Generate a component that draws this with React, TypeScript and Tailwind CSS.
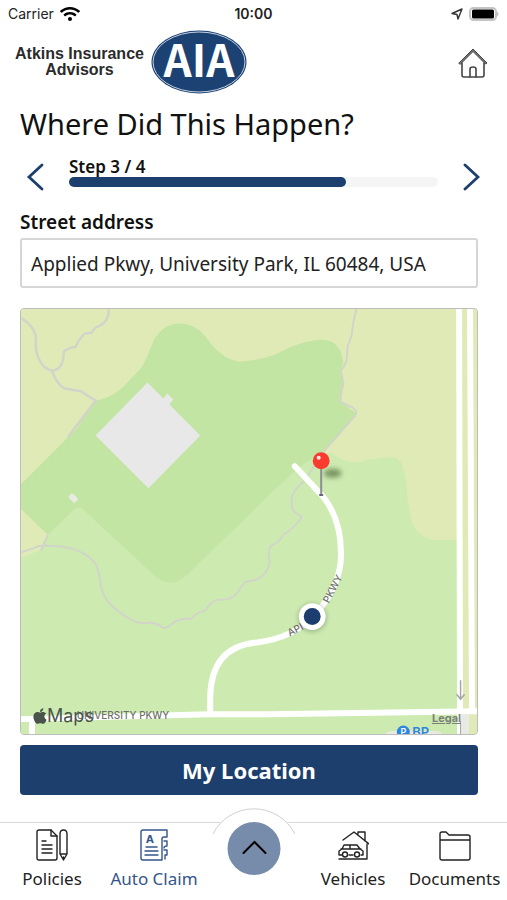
import { useState, type ReactNode } from 'react';
import { FaApple, FaWifi } from 'react-icons/fa';

interface NavItemProps {
  label: string;
  active?: boolean;
  children: ReactNode;
}

const TOTAL_STEPS = 4;

function NavItem({ label, active, children }: NavItemProps) {
  return (
    <a
      href="#"
      aria-current={active ? 'page' : undefined}
      className={`flex flex-col items-center gap-1.5 pt-1.5 whitespace-nowrap ${
        active ? 'text-[#34558a]' : 'text-[#222222]'
      }`}
    >
      <svg
        viewBox="0 0 32 32"
        className="w-8 h-8"
        fill="none"
        stroke="currentColor"
        strokeWidth="1.4"
        strokeLinecap="round"
        strokeLinejoin="round"
        aria-hidden="true"
      >
        {children}
      </svg>
      <span className="text-[17px] leading-6">{label}</span>
    </a>
  );
}

function StatusBar() {
  return (
    <div className="grid grid-cols-3 items-center h-7 px-2 font-['Inter',sans-serif] text-sm text-[#222222]">
      <div className="flex items-center gap-1.5">
        <span>Carrier</span>
        <FaWifi className="w-5 h-4 text-black" />
      </div>
      <span className="text-center font-semibold">10:00</span>
      <div className="flex items-center justify-end gap-1.5">
        <svg viewBox="0 0 12 12" className="w-3 h-3" fill="none" stroke="#333333" strokeWidth="1.4" strokeLinejoin="round">
          <path d="M1 5.500 11 1 7 11 6 6.500Z" />
        </svg>
        <svg viewBox="0 0 30 14" className="w-[30px] h-3.5">
          <rect x="1" y="1" width="26" height="12" rx="3.500" fill="#ffffff" stroke="#c4c4c4" strokeWidth="2" />
          <rect x="3" y="2.500" width="22" height="9" rx="1.500" fill="#000000" />
          <path d="M28 4.500v5q3-2.500 0-5Z" fill="#bdbdbd" />
        </svg>
      </div>
    </div>
  );
}

function Header() {
  return (
    <header className="flex items-center justify-between h-[68px] pl-[15px] pr-[19px]">
      <div className="flex items-center gap-[7px]">
        <p className="text-center font-['Liberation_Sans',sans-serif] font-bold text-base leading-4 text-[#2b2b2b]">
          Atkins Insurance
          <br />
          Advisors
        </p>
        <svg viewBox="0 0 96 64" className="w-24 h-16" role="img" aria-label="AIA logo">
          <ellipse cx="48" cy="32" rx="47.500" ry="31.500" fill="#1c4274" />
          <ellipse cx="48" cy="32" rx="46" ry="30" fill="none" stroke="#c5d0df" strokeWidth="1" />
          <text
            x="48"
            y="47"
            textAnchor="middle"
            fontSize="44"
            fontWeight="700"
            fill="#ffffff"
            className="font-['Noto_Sans_CJK_SC',sans-serif]"
          >
            AIA
          </text>
        </svg>
      </div>
      <button type="button" aria-label="Home" className="mt-0.5">
        <svg viewBox="0 0 30 30" className="w-[30px] h-[30px]" fill="none" stroke="#444444" strokeWidth="1.600" strokeLinecap="round" strokeLinejoin="round">
          <path d="M1 15 15 1l14 14-1.500 1L15 3.500 2.500 16Z" fill="#777777" strokeWidth="1" />
          <path d="M4 15v12q0 2 2 2h18q2 0 2-2V15" />
          <path d="M12 29v-8q0-2 3-2t3 2v8" />
        </svg>
      </button>
    </header>
  );
}

function LocationMap() {
  return (
    <div className="relative aspect-[458/427] overflow-hidden rounded border border-[#bdbdbd] bg-[#e0eab6]">
      <svg viewBox="20 308 458 427" preserveAspectRatio="xMidYMid slice" className="block w-full h-full" role="img" aria-label="Map of Applied Pkwy">
        <defs>
          <filter id="soft" x="-50%" y="-100%" width="200%" height="300%">
            <feGaussianBlur stdDeviation="2.500" />
          </filter>
        </defs>

        {/* terrain */}
        <rect x="20" y="308" width="458" height="427" fill="#e0eab6" />
        <path
          d="M20 558 38 551 47 535 78 500H260L312 455 333 453Q345 463 359 462Q376 457 393 457Q401 458 403 465Q408 480 408 496L412 520Q417 537 435 540H458V735H20Z"
          fill="#cdebb1"
        />
        <path
          d="M20 484 82 422Q66 436 96 400Q112 397 123 386L140 368Q145 361 151 345Q158 327 174 323Q194 320 207 338Q222 359 240 361Q262 359 277 353Q298 341 320 339Q335 338 341 351L344 362 340 371 344 382 340 400Q348 407 357 413L325 451 308 461Q294 470 250 514L187 575Q170 591 153 575L84 511Q78 504 72 511L47 535 20 509Z"
          fill="#c3e5a4"
        />
        <path d="m147 382 16 16 4-5 6 6-4 5 31 31-52 53-53-53Z" fill="#e8e8e8" />
        <rect x="68" y="495" width="9" height="6" rx="2" fill="#e8ebe4" transform="rotate(45 72.500 498)" />

        {/* trails */}
        <g fill="none" stroke="#d2d4ca" strokeWidth="2" strokeLinejoin="round">
          <path d="M108 308q1 12-9 17-5 1-8 7-8 0-10 4-4 4-6 10-10 2-12 5 0 18-12 19" strokeWidth="2.500" />
          <path d="M20 317q13 8 15 19-1 15 3 22 4 10 13 12 5 14 13 18l17 3q8 6 14 9L67 437" strokeWidth="2.500" />
          <path d="M357 308q-4 14-5 27l-4 11-1 14q-2 6-6 10l3 13q-3 8-3 18 5 3 12 6 6 4 2 9L325 450 305 480q-15 13-13 21-1 9 3 11l7 5-2 3q-7 9-17 15-2 6-12 11-4 6-1 16-2 13-14 18l-10 2q-4 3-8 10-6 9-20 8-8 2-13 11-9 2-14 8-12 0-18 4-5 6-11 5-5-4-12-5-11 2-19-3-27-14-31-34-2-19-6-23-6-8-19-13-14-5-37-4-6 3-20 7" />
          <path d="m40 551 7-16" />
        </g>

        {/* roads */}
        <g fill="none" stroke="#ffffff">
          <path d="m460 308 1 427M471 308l2 404" strokeWidth="6" />
          <path d="m20 720 190-5h60l208-3" strokeWidth="6" />
          <path d="M31 719v16" strokeWidth="6" />
          <path
            d="M210 714V698Q211 647 257 643Q295 638 315 615Q337 592 341 563Q344 522 323 496L295 466"
            strokeWidth="6"
            strokeLinecap="round"
          />
        </g>
        <rect x="462" y="715" width="8" height="20" fill="#e9e9e5" />
        <path d="M461.500 722v13" stroke="#a5a5a5" fill="none" />
        <path d="M461.500 681v18m-4-4 4 5 4-5" stroke="#a5a5a5" strokeWidth="1.500" fill="none" />

        {/* labels */}
        <g className="font-['Inter',sans-serif]" fontSize="10" fontWeight="500" fill="#6f706d">
          <text x="290" y="637" transform="rotate(-28 290 637)">API</text>
          <text x="329" y="604" transform="rotate(-62 329 604)">PKWY</text>
          <text x="76" y="720">UNIVERSITY PKWY</text>
        </g>
        <path d="M386 735q2-3 8-3h42q6 0 7 3Z" fill="#e9e9e0" />
        <circle cx="404" cy="733" r="6.500" fill="#2d86e0" />
        <g className="font-['Inter',sans-serif]" fontWeight="600">
          <text x="404" y="736" textAnchor="middle" fontSize="9" fill="#ffffff">P</text>
          <text x="413" y="738" fontSize="13" fill="#2d86e0">BP</text>
        </g>

        {/* current position */}
        <circle cx="312.500" cy="618" r="14" fill="#000000" opacity="0.250" filter="url(#soft)" />
        <circle cx="312.500" cy="617" r="13.500" fill="#ffffff" />
        <circle cx="312.500" cy="617" r="8.500" fill="#1c3d6e" />

        {/* dropped pin */}
        <ellipse cx="333" cy="473" rx="9" ry="4.500" fill="#59713f" opacity="0.700" filter="url(#soft)" />
        <path d="M321.500 466v29" stroke="#8b8f92" strokeWidth="2" />
        <path d="M319.500 495h4" stroke="#666a6e" strokeWidth="2" />
        <circle cx="321.500" cy="460.500" r="8.500" fill="#fb3b30" />
        <circle cx="319" cy="457.500" r="2" fill="#ffffff" opacity="0.900" />
      </svg>
      <div className="absolute left-3 bottom-1.5 flex items-center font-['Inter',sans-serif] text-lg leading-6 text-[#4a544a]">
        <FaApple className="w-3.5 h-[18px]" />
        <span>Maps</span>
      </div>
      <a href="#" className="absolute right-4 bottom-2 font-['Inter',sans-serif] text-[11px] leading-4 font-bold underline text-[#7b8078]">
        Legal
      </a>
    </div>
  );
}

export default function App() {
  const [step, setStep] = useState(3);
  const [address, setAddress] = useState('Applied Pkwy, University Park, IL 60484, USA');

  return (
    <div className="flex flex-col min-h-screen bg-white font-['Noto_Sans',sans-serif] text-[#111111]">
      <StatusBar />
      <Header />

      <main className="flex flex-col pl-5 pr-[29px]">
        <h1 className="text-[29px] leading-10 mt-2">Where Did This Happen?</h1>

        <div className="flex items-center justify-between mt-2">
          <button type="button" aria-label="Previous step" className="w-[49px] pt-2.5 pl-1.5" onClick={() => setStep(Math.max(1, step - 1))}>
            <svg viewBox="0 0 18 30" className="w-[18px] h-[30px]" fill="none" stroke="#1c3f6e" strokeWidth="2.800" strokeLinecap="round">
              <path d="M16 3 3 15l13 12" />
            </svg>
          </button>
          <div className="flex-1">
            <p className="text-[17px] leading-5 font-semibold">Step {step} / {TOTAL_STEPS}</p>
            <div className="h-2.5 rounded-full bg-[#f5f5f5]">
              <div className="h-full rounded-full bg-[#1c3f6e]" style={{ width: `${(step / TOTAL_STEPS) * 100}%` }} />
            </div>
          </div>
          <button type="button" aria-label="Next step" className="w-10 pt-2.5 pl-6" onClick={() => setStep(Math.min(TOTAL_STEPS, step + 1))}>
            <svg viewBox="0 0 18 30" className="w-[18px] h-[30px]" fill="none" stroke="#1c3f6e" strokeWidth="2.800" strokeLinecap="round">
              <path d="m3 3 13 12L3 27" />
            </svg>
          </button>
        </div>

        <label htmlFor="street" className="mt-4 text-[19px] leading-7 font-semibold">Street address</label>
        <input
          id="street"
          type="text"
          value={address}
          onChange={(event) => setAddress(event.target.value)}
          className="w-full h-[50px] mt-0.5 px-[9px] pt-0.5 text-[19px] border-2 border-[#d6d6d6] rounded-[3px] text-[#222222]"
        />

        <div className="mt-5">
          <LocationMap />
        </div>

        <button type="button" className="h-[50px] mt-2.5 rounded bg-[#1c3f6e] text-[22px] leading-7 font-bold text-white">
          My Location
        </button>
      </main>

      <nav className="grid grid-cols-[104fr_100fr_100fr_98fr_105fr] h-[78px] mt-auto border-t border-[#d9d9d9]">
        <NavItem label="Policies">
          <path d="M3 1h12l6 6v22q0 2-2 2H3q-2 0-2-2V3q0-2 2-2Z" />
          <path d="M15 1v6h6M6 12h4M6 16h10M6 20h10M6 24h10" />
          <path d="M24 5q0-4 3.500-4T31 5v20l-3.500 6L24 25ZM24 25h7M27.500 28v3" />
        </NavItem>
        <NavItem label="Auto Claim" active>
          <path d="M29 1H5q-2 0-2 2v26q0 2 2 2h19V10q0-2 2-2h3V1" />
          <path d="M26 12h3v5q-3 0-3 2M26 21h3v5h-2v4" />
          <path d="M8 18h11M7 22h13M7 26h13" />
          <text x="8" y="14" fontSize="10" fontWeight="700" fill="currentColor" stroke="none" className="font-['DejaVu_Sans',sans-serif]">A</text>
        </NavItem>
        <div className="relative">
          <svg viewBox="0 0 88 28" className="absolute -top-4 left-1/2 -translate-x-1/2 w-[88px] h-7">
            <path d="M10 16Q22 2 44 2t34 14l5 11H5Z" fill="#ffffff" />
            <path d="M3 27a46 46 0 0 1 82 0" fill="none" stroke="#d0d0d0" />
          </svg>
          <button
            type="button"
            aria-label="More"
            className="absolute -top-px left-1/2 -translate-x-1/2 flex items-center justify-center w-[53px] h-[53px] rounded-full bg-[#778cab]"
          >
            <svg viewBox="0 0 26 14" className="w-[26px] h-3.5 -mt-1" fill="none" stroke="#000000" strokeWidth="2" strokeLinecap="round">
              <path d="M2 13 13 2l11 11" />
            </svg>
          </button>
        </div>
        <NavItem label="Vehicles">
          <path d="M6 11 17 3l15 12M21 5V3h7v9M30 15v15H2" />
          <path d="M5 26H2v-4l3-2 2-4h13l3 4 3 2v4h-2M12 26h4M4 20h20M13 16v4" />
          <circle cx="8" cy="25.500" r="2.500" />
          <circle cx="20" cy="25.500" r="2.500" />
        </NavItem>
        <NavItem label="Documents">
          <path d="M1 29V5q0-2 2-2h4l3 3h19q2 0 2 2v21q0 2-2 2H3q-2 0-2-2ZM1 11h30" />
        </NavItem>
      </nav>
    </div>
  );
}
